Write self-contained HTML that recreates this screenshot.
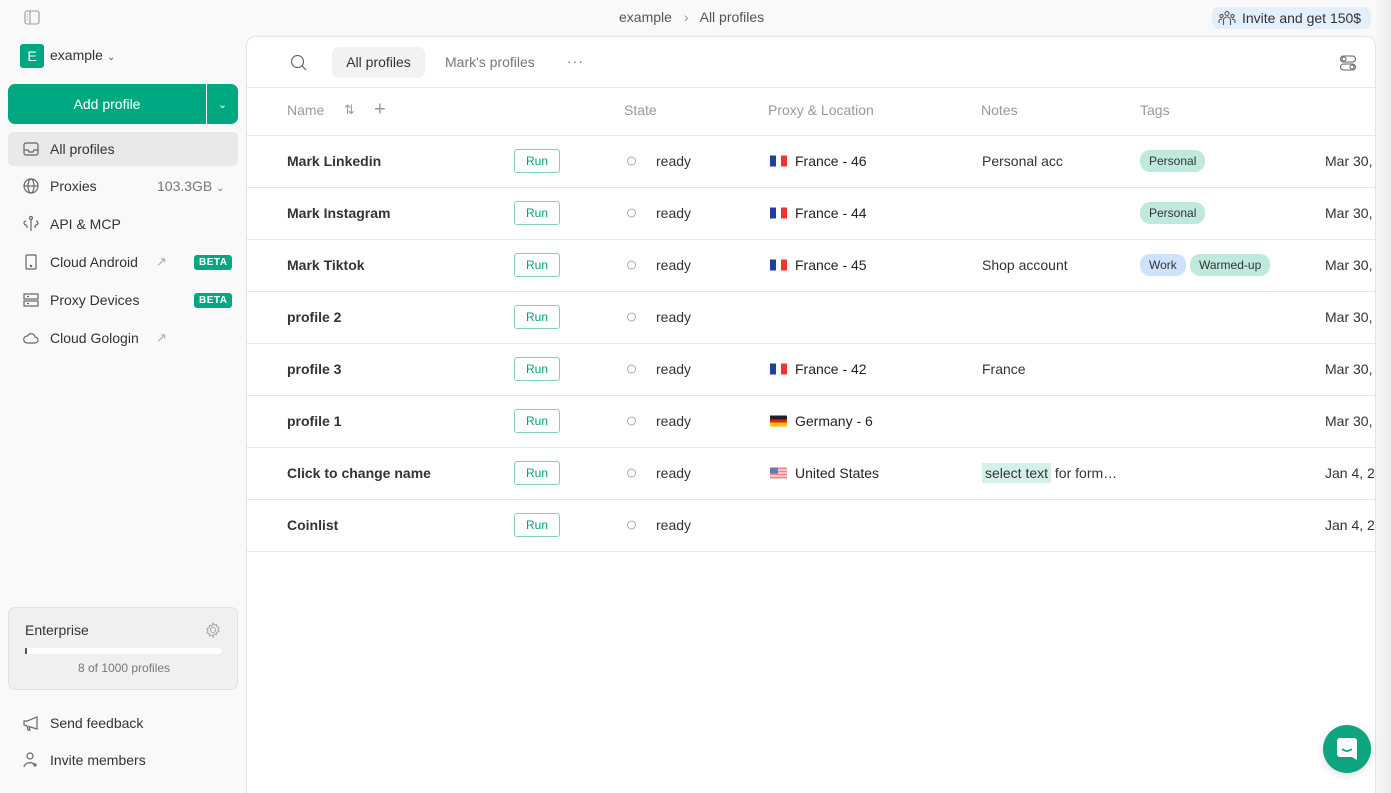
<!DOCTYPE html>
<html style="overflow:hidden;height:793px"><head><meta charset="utf-8"><style>
*{box-sizing:border-box;margin:0;padding:0}
body{width:1391px;height:793px;overflow:hidden;background:#f9f9f9;font-family:"Liberation Sans",sans-serif;color:#222;position:relative;font-size:14px}
.a{position:absolute}
.nav{position:absolute;left:8px;width:230px;height:34px;display:flex;align-items:center;padding-left:14px;font-size:14px;color:#333}
.nav svg{width:18px;height:18px;margin-right:10px;stroke:#666;fill:none;stroke-width:1.2}
.beta{position:absolute;left:186px;background:#00a881;color:#fff;font-size:10px;font-weight:bold;padding:2px 5px;border-radius:3px;letter-spacing:.5px}
.ext{position:absolute;left:148px;color:#aaa;font-size:13px}
.panel{position:absolute;left:246px;top:36px;width:1130px;height:770px;background:#fff;border:1px solid #e4e4e4;border-radius:9px;overflow:hidden}
.line{position:absolute;left:0;width:100%;height:1px;background:#e6e6e6}
.row{position:absolute;left:0;width:100%;height:52px}
.row>*{position:absolute;top:50%;transform:translateY(-50%);white-space:nowrap}
.nm{left:40px;font-weight:bold;color:#333;font-size:14px}
.run{left:267px;width:46px;height:24px;border:1px solid #7fd1bd;border-radius:3px;color:#00a080;font-size:12px;display:flex;align-items:center;justify-content:center}
.dot{left:380px;width:9px;height:9px;border:1px solid #aaa;border-radius:50%}
.st{left:409px;color:#333}
.fl{left:523px;width:17px;height:11px;display:flex}
.px{left:548px;color:#222}
.nt{left:735px;color:#333}
.dt{left:1078px;color:#333}
.tag{font-size:12px;padding:4px 9px;border-radius:10px;background:#bfe9dc;color:#333}
.hd{position:absolute;top:50%;transform:translateY(-50%);color:#999;font-size:14px}
</style></head><body>
<svg class="a" style="left:24px;top:10px" width="16" height="15" viewBox="0 0 16 15" fill="none" stroke="#999" stroke-width="1.1"><rect x="1" y="1" width="14" height="13" rx="2"/><line x1="6" y1="1" x2="6" y2="14"/><line x1="3" y1="4" x2="4" y2="4"/><line x1="3" y1="7" x2="4" y2="7"/><line x1="3" y1="10" x2="4" y2="10"/></svg>
<div class="a" style="left:619px;top:9px;color:#555;font-size:14px">example <span style="color:#999;margin:0 8px">›</span> All profiles</div>
<div class="a" style="left:1212px;top:7px;height:22px;width:159px;background:#e3effb;border-radius:7px;font-size:14px;color:#333;display:flex;align-items:center;padding-left:6px">
<svg width="18" height="16" viewBox="0 0 18 16" fill="none" stroke="#555" stroke-width="1.1" style="margin-right:6px"><circle cx="9" cy="3.5" r="2"/><circle cx="3.5" cy="6" r="1.6"/><circle cx="14.5" cy="6" r="1.6"/><path d="M5.5 15v-5a3.5 3 0 0 1 7 0v5"/><path d="M1 13v-2a2 2 0 0 1 3-1.5M17 13v-2a2 2 0 0 0-3-1.5"/></svg>Invite and get 150$</div>
<div class="a" style="left:20px;top:44px;width:24px;height:24px;background:#00a881;border-radius:3px;color:#fff;font-size:14px;display:flex;align-items:center;justify-content:center">E</div>
<div class="a" style="left:50px;top:47px;font-size:14px;color:#333">example <span style="font-size:10px;color:#555">⌄</span></div>
<div class="a" style="left:8px;top:84px;width:230px;height:40px;background:#00a881;border-radius:7px;color:#fff;font-size:14px;">
<div class="a" style="left:0;top:0;width:198px;height:40px;display:flex;align-items:center;justify-content:center">Add profile</div>
<div class="a" style="left:198px;top:0;width:1px;height:40px;background:#fff"></div>
<div class="a" style="left:199px;top:0;width:31px;height:40px;display:flex;align-items:center;justify-content:center;font-size:11px">⌄</div></div>
<div class="nav" style="top:132px;background:#e9e9e9;border-radius:5px"><svg viewBox="0 0 18 18"><rect x="2" y="3" width="14" height="12" rx="2"/><path d="M2 10h4l1 2h4l1-2h4"/></svg>All profiles</div>
<div class="nav" style="top:169px"><svg viewBox="0 0 18 18"><circle cx="9" cy="9" r="7"/><ellipse cx="9" cy="9" rx="3" ry="7"/><line x1="2" y1="9" x2="16" y2="9"/></svg>Proxies<span style="position:absolute;left:149px;color:#777">103.3GB <span style="font-size:10px">⌄</span></span></div>
<div class="nav" style="top:207px"><svg viewBox="0 0 18 18"><circle cx="9" cy="3" r="1.5"/><path d="M9 5v11M4 6a2 2 0 1 0 0 4c1 0 1 2 1 3M14 6a2 2 0 1 1 0 4c-1 0-1 2-1 3"/></svg>API &amp; MCP</div>
<div class="nav" style="top:245px"><svg viewBox="0 0 18 18"><rect x="4" y="2" width="10" height="14" rx="1"/><circle cx="9" cy="13" r=".6" fill="#666"/></svg>Cloud Android<span class="ext" style="left:148px">↗</span><span class="beta" style="left:186px">BETA</span></div>
<div class="nav" style="top:283px"><svg viewBox="0 0 18 18"><rect x="2" y="3" width="14" height="5"/><rect x="2" y="10" width="14" height="5"/><line x1="5" y1="5.5" x2="7" y2="5.5"/><line x1="5" y1="12.5" x2="7" y2="12.5"/></svg>Proxy Devices<span class="beta">BETA</span></div>
<div class="nav" style="top:321px"><svg viewBox="0 0 18 18"><path d="M5 14h8a3 3 0 0 0 0-6 4 4 0 0 0-7.5-1A3.5 3.5 0 0 0 5 14z"/></svg>Cloud Gologin<span class="ext">↗</span></div>
<div class="a" style="left:8px;top:607px;width:230px;height:83px;background:#f0f0f0;border:1px solid #e2e2e2;border-radius:7px">
<div class="a" style="left:16px;top:14px;font-size:14px;color:#333">Enterprise</div>
<svg class="a" style="left:196px;top:14px" width="16" height="16" viewBox="0 0 16 16" fill="none" stroke="#aaa" stroke-width="1.1"><circle cx="8" cy="8" r="2.5"/><path d="M8 1l1.3 2 2.2-.8.3 2.3 2.2.8-1 2.1 1 2.1-2.2.8-.3 2.3-2.2-.8L8 15l-1.3-2-2.2.8-.3-2.3-2.2-.8 1-2.1-1-2.1 2.2-.8.3-2.3 2.2.8z"/></svg>
<div class="a" style="left:16px;top:40px;width:197px;height:6px;background:#fff;border-radius:3px"><div style="width:2px;height:6px;background:#555"></div></div>
<div class="a" style="left:0;top:53px;width:230px;text-align:center;font-size:12px;color:#777">8 of 1000 profiles</div></div>
<div class="nav" style="top:706px"><svg viewBox="0 0 18 18"><path d="M2 7v4l3 1 1 4h2l-1-3.5L15 15V3L5 7z"/></svg>Send feedback</div>
<div class="nav" style="top:743px"><svg viewBox="0 0 18 18"><circle cx="8" cy="5" r="3"/><path d="M2 16a6 5 0 0 1 10-3M13 12v4M11 14h4"/></svg>Invite members</div>
<div class="panel">
<svg class="a" style="left:43px;top:17px" width="18" height="18" viewBox="0 0 18 18" fill="none" stroke="#666" stroke-width="1.2"><circle cx="7.5" cy="7.5" r="6"/><line x1="12" y1="12" x2="16" y2="16"/></svg>
<div class="a" style="left:85px;top:10px;width:93px;height:31px;background:#f2f2f2;border-radius:7px;display:flex;align-items:center;justify-content:center;color:#333;font-size:14px;padding-bottom:2px">All profiles</div>
<div class="a" style="left:198px;top:17px;color:#777;font-size:14px">Mark's profiles</div>
<div class="a" style="left:320px;top:17px;color:#777;font-size:14px;letter-spacing:1px;line-height:14px">···</div>
<svg class="a" style="left:1092px;top:17px" width="18" height="18" viewBox="0 0 18 18" fill="none" stroke="#666" stroke-width="1.1"><rect x="1.5" y="2" width="15" height="6" rx="3"/><rect x="1.5" y="10" width="15" height="6" rx="3"/><circle cx="5" cy="5" r="2"/><circle cx="13" cy="13" r="2"/></svg>
<div class="line" style="top:50px"></div>
<div class="row" style="top:47px">
<span class="hd" style="left:40px">Name</span><span class="hd" style="left:97px;font-size:13px">⇅</span><span class="hd" style="left:127px;font-size:20px;font-weight:lighter">+</span>
<span class="hd" style="left:377px">State</span><span class="hd" style="left:521px">Proxy &amp; Location</span><span class="hd" style="left:734px">Notes</span><span class="hd" style="left:893px">Tags</span></div>
<div class="line" style="top:98px"></div>
<div class="row" style="top:98px"><span class="nm">Mark Linkedin</span><span class="run">Run</span><span class="dot"></span><span class="st">ready</span><span class="fl"><i style="flex:1;background:#1f3fa0"></i><i style="flex:1;background:#fff"></i><i style="flex:1;background:#e33"></i></span><span class="px">France - 46</span><span class="nt">Personal acc</span><span class="tag" style="left:893px">Personal</span><span class="dt">Mar 30,</span></div>
<div class="line" style="top:150px"></div>
<div class="row" style="top:150px"><span class="nm">Mark Instagram</span><span class="run">Run</span><span class="dot"></span><span class="st">ready</span><span class="fl"><i style="flex:1;background:#1f3fa0"></i><i style="flex:1;background:#fff"></i><i style="flex:1;background:#e33"></i></span><span class="px">France - 44</span><span class="tag" style="left:893px">Personal</span><span class="dt">Mar 30,</span></div>
<div class="line" style="top:202px"></div>
<div class="row" style="top:202px"><span class="nm">Mark Tiktok</span><span class="run">Run</span><span class="dot"></span><span class="st">ready</span><span class="fl"><i style="flex:1;background:#1f3fa0"></i><i style="flex:1;background:#fff"></i><i style="flex:1;background:#e33"></i></span><span class="px">France - 45</span><span class="nt">Shop account</span><span class="tag" style="left:893px;background:#cfe2fb">Work</span><span class="tag" style="left:943px">Warmed-up</span><span class="dt">Mar 30,</span></div>
<div class="line" style="top:254px"></div>
<div class="row" style="top:254px"><span class="nm">profile 2</span><span class="run">Run</span><span class="dot"></span><span class="st">ready</span><span class="dt">Mar 30,</span></div>
<div class="line" style="top:306px"></div>
<div class="row" style="top:306px"><span class="nm">profile 3</span><span class="run">Run</span><span class="dot"></span><span class="st">ready</span><span class="fl"><i style="flex:1;background:#1f3fa0"></i><i style="flex:1;background:#fff"></i><i style="flex:1;background:#e33"></i></span><span class="px">France - 42</span><span class="nt">France</span><span class="dt">Mar 30,</span></div>
<div class="line" style="top:358px"></div>
<div class="row" style="top:358px"><span class="nm">profile 1</span><span class="run">Run</span><span class="dot"></span><span class="st">ready</span><span class="fl" style="flex-direction:column"><i style="flex:1;background:#222"></i><i style="flex:1;background:#d22"></i><i style="flex:1;background:#f5c400"></i></span><span class="px">Germany - 6</span><span class="dt">Mar 30,</span></div>
<div class="line" style="top:410px"></div>
<div class="row" style="top:410px"><span class="nm">Click to change name</span><span class="run">Run</span><span class="dot"></span><span class="st">ready</span><span class="fl" style="background:repeating-linear-gradient(#e88 0 2px,#fff 2px 3px)"><i style="width:8px;height:6px;background:#6677bb"></i></span><span class="px">United States</span><span class="nt"><span style="background:#d3f1e8;padding:2px 3px">select text</span> for form…</span><span class="dt">Jan 4, 2</span></div>
<div class="line" style="top:462px"></div>
<div class="row" style="top:462px"><span class="nm">Coinlist</span><span class="run">Run</span><span class="dot"></span><span class="st">ready</span><span class="dt">Jan 4, 2</span></div>
<div class="line" style="top:514px"></div>
</div>
<div class="a" style="left:1376px;top:0;width:15px;height:793px;background:linear-gradient(90deg,#f6f6f6,#ececec)"></div>
<div class="a" style="left:1323px;top:725px;width:48px;height:48px;border-radius:50%;background:#0ea47f;box-shadow:0 2px 8px rgba(0,0,0,.15)">
<svg class="a" style="left:14px;top:13px" width="20" height="22" viewBox="0 0 20 22"><path d="M3 0h14a3 3 0 0 1 3 3v19l-5-3H3a3 3 0 0 1-3-3V3a3 3 0 0 1 3-3z" fill="#fff"/><path d="M5 11q5 4 10 0" stroke="#0ea47f" stroke-width="1.6" fill="none"/></svg></div>
</body></html>
